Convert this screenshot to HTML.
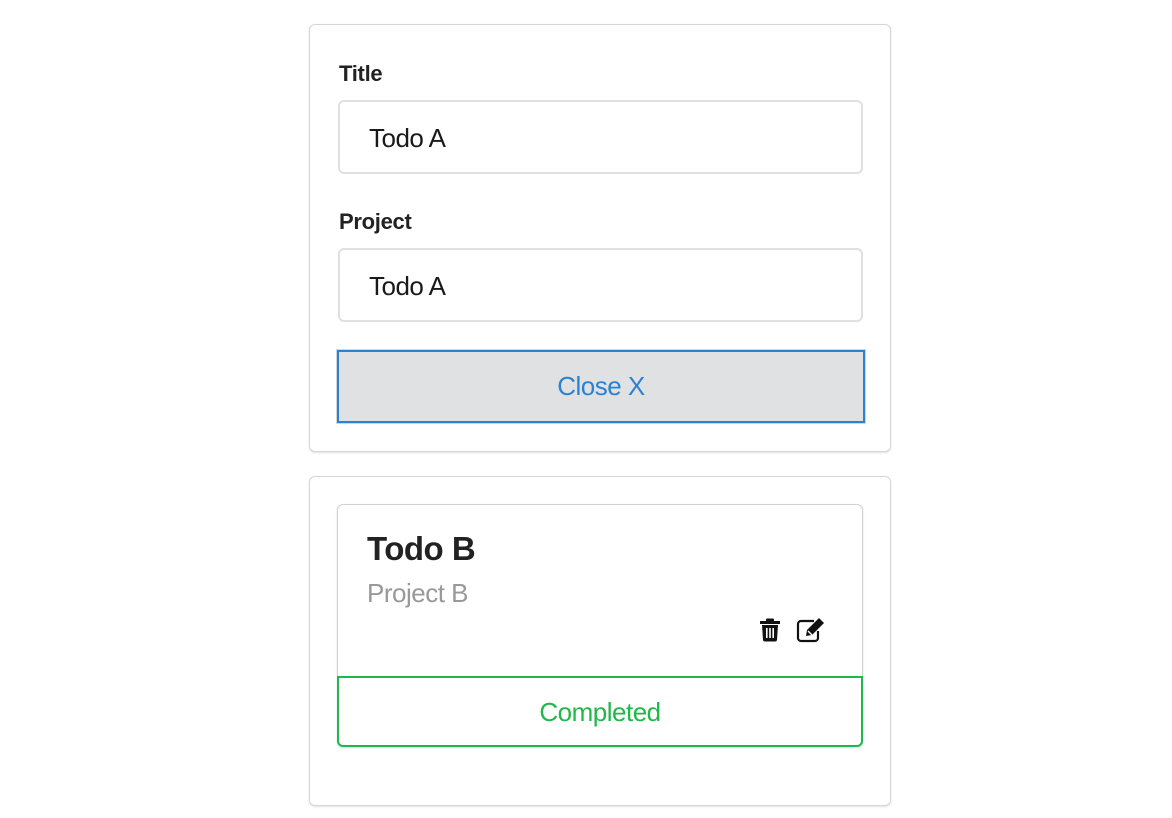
<!DOCTYPE html>
<html><head><style>
body{margin:0;width:1172px;height:818px;background:#fff;font-family:"Liberation Sans",sans-serif;position:relative;overflow:hidden}
.card{position:absolute;left:309px;width:580px;border:1px solid #d6d6d6;border-radius:6px;box-shadow:0 1px 2px rgba(0,0,0,.12);background:#fff}
.lbl{position:absolute;left:29px;font-weight:bold;font-size:22px;color:#222;letter-spacing:-0.3px}
.inp{position:absolute;left:28px;height:74px;border:2px solid #e0e0e0;border-radius:6px;box-sizing:border-box;width:525px;font-size:26px;color:#1a1a1a;line-height:72px;padding-left:29px;letter-spacing:-0.5px}
.btn{position:absolute;left:27px;top:325px;width:528px;height:73px;box-sizing:border-box;border:2px solid #2a82d3;outline:1px solid #d5d5d5;background:#e0e1e3;color:#2a82d3;font-size:26px;text-align:center;line-height:69px;letter-spacing:-0.5px}
</style></head><body>
<div class="card" style="top:24px;height:426px">
 <div class="lbl" style="top:36px">Title</div>
 <div class="inp" style="top:75px">Todo A</div>
 <div class="lbl" style="top:184px">Project</div>
 <div class="inp" style="top:223px">Todo A</div>
 <div class="btn">Close X</div>
</div>
<div class="card" style="top:476px;height:328px">
 <div style="position:absolute;left:27px;top:27px;width:526px;height:243px;border:1px solid #d0d0d0;border-radius:6px;box-sizing:border-box;box-shadow:0 1px 2px rgba(0,0,0,.12)">
  <div style="position:absolute;left:29px;top:25px;font-size:33px;font-weight:bold;color:#222;letter-spacing:-0.5px">Todo B</div>
  <div style="position:absolute;left:29px;top:73px;font-size:26px;color:#999;letter-spacing:-0.5px">Project B</div>
  <svg style="position:absolute;left:421px;top:113px" width="22" height="24" viewBox="0 0 22 24"><rect x="1" y="3" width="20" height="3" fill="#111"/><rect x="7" y="0.5" width="8" height="3" rx="1" fill="#111"/><path d="M3 7h16l-1 15a2 2 0 0 1-2 1.5H6A2 2 0 0 1 4 22z" fill="#111"/><rect x="7" y="10" width="1.6" height="10" fill="#fff"/><rect x="10.2" y="10" width="1.6" height="10" fill="#fff"/><rect x="13.4" y="10" width="1.6" height="10" fill="#fff"/></svg>
  <svg style="position:absolute;left:458px;top:112px" width="30" height="26" viewBox="0 0 30 26"><path d="M18 4H5a3 3 0 0 0-3 3v14a3 3 0 0 0 3 3h14a3 3 0 0 0 3-3v-7" fill="none" stroke="#111" stroke-width="2.2"/><path d="M23 1l5 5-12 12-6 1 1-6z" fill="#111"/><path d="M12 14l4 4" stroke="#fff" stroke-width="1.3"/></svg>
  <div style="position:absolute;left:-1px;top:171px;width:526px;height:71px;border:2px solid #21b84a;border-radius:0 0 6px 6px;box-sizing:border-box;color:#21b84a;font-size:26px;text-align:center;line-height:69px;letter-spacing:-0.5px;background:#fff">Completed</div>
 </div>
</div>
</body></html>
